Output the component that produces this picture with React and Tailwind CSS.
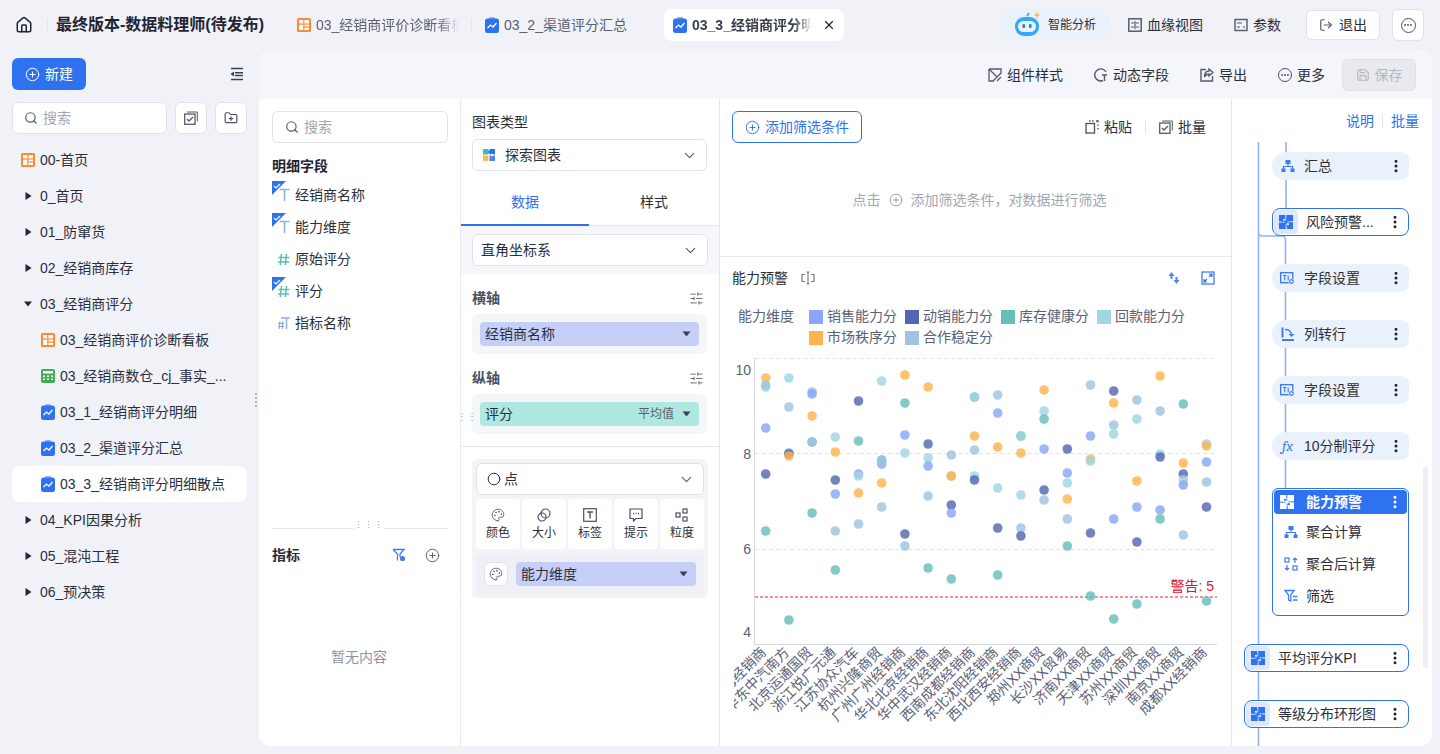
import {
  House, Search, CirclePlus, ChevronDown, X, Ellipsis, EllipsisVertical, LogOut, Save,
  SlidersHorizontal, Palette, FolderPlus, Circle,
} from 'lucide-react';

const Dash = ({ size = 14 }) => (
  <svg width={size} height={size} viewBox="0 0 14 14" className="shrink-0">
    <rect width="14" height="14" rx="1.5" fill="#ff8a2b" />
    <rect x="2" y="2" width="10" height="3.4" fill="#fff" />
    <rect x="2" y="6.6" width="4.2" height="5.4" fill="#fff" />
    <rect x="7.4" y="6.6" width="4.6" height="1.8" fill="#fff" />
    <rect x="7.4" y="9.6" width="4.6" height="2.4" fill="#fff" />
    <rect x="6.2" y="2" width="1.2" height="3.4" fill="#ff8a2b" />
  </svg>
);

const TableIcon = () => (
  <svg width="14" height="14" viewBox="0 0 14 14" className="shrink-0">
    <rect width="14" height="14" rx="2" fill="#3fae55" />
    <rect x="2" y="2" width="10" height="2.5" fill="#fff" />
    <path d="M2 6.5h2v1.5H2zM6 6.5h2v1.5H6zM10 6.5h2v1.5h-2zM2 9.5h2V11H2zM6 9.5h2V11H6zM10 9.5h2V11h-2z" fill="#fff" />
  </svg>
);

const ChartClip = () => (
  <svg width="14" height="16" viewBox="0 0 14 16" className="shrink-0">
    <rect x="4" y="0" width="6" height="3" rx="1" fill="#8fb2f5" />
    <rect y="1.5" width="14" height="14.5" rx="2.5" fill="#2f72f0" />
    <path d="M2.5 11l3-3 2.5 2 3.5-4" fill="none" stroke="#fff" strokeWidth="1.3" />
  </svg>
);

const Puzzle = ({ color = '#2f72f0', gap = '#dde8fd' }) => (
  <svg width="14" height="14" viewBox="0 0 14 14" className="shrink-0">
    <rect width="14" height="14" fill={color} />
    <path d="M6.8 0v3.5M7.2 10.5V14M0 7.2h3.5M10.5 6.8H14" stroke={gap} strokeWidth="1" />
    <path d="M4 7.2h1.5M8.5 6.8H10M6.8 4v1.5M7.2 8.5V10" stroke={gap} strokeWidth="1" />
    <circle cx="5" cy="4.8" r="1.1" fill={gap} />
    <circle cx="9" cy="9.2" r="1.1" fill={gap} />
  </svg>
);

const ColorPuzzle = () => (
  <svg width="12" height="12" viewBox="0 0 12 12" className="shrink-0">
    <rect width="5.5" height="5.5" fill="#3dbdb0" />
    <rect x="6.5" width="5.5" height="5.5" fill="#2f72f0" />
    <rect y="6.5" width="5.5" height="5.5" fill="#ffb84d" />
    <rect x="6.5" y="6.5" width="5.5" height="5.5" fill="#4f86f5" />
    <circle cx="6" cy="3" r="1.2" fill="#2f72f0" />
    <circle cx="9" cy="6" r="1.2" fill="#fff" />
  </svg>
);

const SumIcon = ({ c = '#3f7cf0' }) => (
  <svg width="14" height="14" viewBox="0 0 14 14" className="shrink-0">
    <rect x="4.5" y="1" width="5" height="4" fill={c} />
    <path d="M7 5v3M2.5 10V7.5h9V10" fill="none" stroke={c} strokeWidth="1.2" />
    <rect x="0.5" y="9.5" width="4" height="3.5" fill={c} />
    <rect x="9.5" y="9.5" width="4" height="3.5" fill={c} />
  </svg>
);

const FieldSet = () => (
  <svg width="15" height="14" viewBox="0 0 15 14" className="shrink-0">
    <rect x="0.7" y="1.7" width="12" height="10" fill="none" stroke="#3f7cf0" strokeWidth="1.4" />
    <path d="M3 4.5h3.5M4.7 4.5v5M8.2 4.5v5" stroke="#3f7cf0" strokeWidth="1.2" fill="none" />
    <circle cx="11.5" cy="10.5" r="3" fill="#e9f1fd" />
    <circle cx="11.5" cy="10.5" r="1.8" fill="none" stroke="#3f7cf0" strokeWidth="1.2" />
  </svg>
);

const Unpivot = () => (
  <svg width="14" height="14" viewBox="0 0 14 14" className="shrink-0">
    <path d="M1.5 0.5v10M1 13h12" stroke="#3f7cf0" strokeWidth="2" fill="none" />
    <path d="M4 2.5c4 0 6 1.5 6.5 5" stroke="#3f7cf0" strokeWidth="1.4" fill="none" />
    <path d="M7.5 7h6l-3 3z" fill="#3f7cf0" />
  </svg>
);

const AfterCalc = () => (
  <svg width="14" height="14" viewBox="0 0 14 14" className="shrink-0" fill="none" stroke="#3f7cf0" strokeWidth="1.2">
    <rect x="1" y="1" width="4" height="4" />
    <rect x="9" y="9" width="4" height="4" />
    <path d="M11 6V1M9 3l2-2 2 2M3 8v5M1 11l2 2 2-2" />
  </svg>
);

const FilterIcon = () => (
  <svg width="14" height="14" viewBox="0 0 14 14" className="shrink-0" fill="none" stroke="#3f7cf0" strokeWidth="1.3">
    <path d="M1 1.5h9L6.8 6v6L4.5 11V6z" />
    <path d="M9 7.5h4.5M9 11h4.5" />
  </svg>
);

const MeasureFilter = () => (
  <svg width="14" height="14" viewBox="0 0 14 14" className="shrink-0" fill="none" stroke="#3f7cf0" strokeWidth="1.3">
    <path d="M1 1.5h11L8 6v3" />
    <path d="M1 1.5L5.5 6v6.5" />
    <circle cx="10.5" cy="10.5" r="2.6" fill="#3f7cf0" stroke="none" />
  </svg>
);

const CollapseIcon = () => (
  <svg width="14" height="14" viewBox="0 0 14 14" className="shrink-0 mr-[3px]">
    <path d="M1 1.5h12M5 5.7h8M5 8.5h8M1 12.5h12" stroke="#39404f" strokeWidth="1.6" fill="none" />
    <path d="M0.5 7L4 4.5v5z" fill="#39404f" />
  </svg>
);

const FieldIcon = ({ kind, checked }) => (
  <svg width="20" height="32" viewBox="0 0 20 32" className="shrink-0">
    {kind === 'T' && <path d="M7.5 10.5h10M12.5 10.5v11.5" stroke="#8fb0e8" strokeWidth="1.6" fill="none" />}
    {kind === '#' && <path d="M9.5 11l-1.2 11M14.5 11l-1.2 11M6.5 14.5h11M6 19h11" stroke="#5cbdb2" strokeWidth="1.5" fill="none" />}
    {kind === 'mix' && (
      <>
        <path d="M9 11h9M14.5 11v11" stroke="#8fb0e8" strokeWidth="1.5" fill="none" />
        <path d="M8 14l-.8 8M11 14l-.8 8M6 16.5h6M6 19.5h6" stroke="#8fa0d8" strokeWidth="1" fill="none" />
      </>
    )}
    {checked && (
      <>
        <path d="M0 2h14L0 16z" fill="#2f72f0" />
        <path d="M2 7l2 2 4-4" stroke="#fff" strokeWidth="1.1" fill="none" />
      </>
    )}
  </svg>
);

const tree = [
  { label: '00-首页', icon: 'dash' },
  { label: '0_首页', caret: 'right' },
  { label: '01_防窜货', caret: 'right' },
  { label: '02_经销商库存', caret: 'right' },
  { label: '03_经销商评分', caret: 'down' },
  { label: '03_经销商评价诊断看板', icon: 'dash', child: true },
  { label: '03_经销商数仓_cj_事实_...', icon: 'table', child: true },
  { label: '03_1_经销商评分明细', icon: 'chart', child: true },
  { label: '03_2_渠道评分汇总', icon: 'chart', child: true },
  { label: '03_3_经销商评分明细散点', icon: 'chart', child: true, active: true },
  { label: '04_KPI因果分析', caret: 'right' },
  { label: '05_混沌工程', caret: 'right' },
  { label: '06_预决策', caret: 'right' },
];

const TreeRow = ({ row }) => (
  <div className={`h-9 flex items-center rounded-lg ${row.active ? 'bg-white' : ''} ${row.child ? 'pl-[29px]' : 'pl-[9px]'}`}>
    {row.caret === 'right' && (
      <svg width="14" height="14" viewBox="0 0 14 14" className="shrink-0"><path d="M4.5 3l6 4-6 4z" fill="#1f2533" /></svg>
    )}
    {row.caret === 'down' && (
      <svg width="14" height="14" viewBox="0 0 14 14" className="shrink-0"><path d="M3 4.5h8l-4 5z" fill="#1f2533" /></svg>
    )}
    {row.icon === 'dash' && <Dash />}
    {row.icon === 'table' && <TableIcon />}
    {row.icon === 'chart' && <ChartClip />}
    <span className="ml-[5px] whitespace-nowrap text-sm text-[#2a2f3c]">{row.label}</span>
  </div>
);

const BatchIcon = () => (
  <svg width="14" height="14" viewBox="0 0 14 14" fill="none" stroke="#555b69" strokeWidth="1.3" className="shrink-0">
    <rect x="0.7" y="3" width="10.3" height="10.3" />
    <path d="M3 1h10.3v9.5" strokeWidth="1" />
    <path d="M3 8l2 2 4-4" />
  </svg>
);

const Sidebar = () => (
  <aside className="w-[259px] shrink-0 pl-3 pr-3 relative">
    <div className="flex items-center justify-between h-8 mt-2">
      <button className="w-[74px] h-8 rounded-md bg-[#2f72f0] text-white text-sm flex items-center justify-center gap-[5px]">
        <CirclePlus size={15} strokeWidth={1.6} />
        新建
      </button>
      <CollapseIcon />
    </div>
    <div className="flex gap-2 mt-3">
      <div className="w-[155px] h-8 rounded-md bg-white border border-[#dfe2ea] flex items-center pl-[11px] gap-[5px] text-sm text-[#a2a6b0]">
        <Search size={14} className="text-[#555b69]" />
        搜索
      </div>
      <div className="w-8 h-8 rounded-md bg-white border border-[#dfe2ea] flex items-center justify-center">
        <BatchIcon />
      </div>
      <div className="w-8 h-8 rounded-md bg-white border border-[#dfe2ea] flex items-center justify-center">
        <FolderPlus size={14} className="text-[#4b5163]" />
      </div>
    </div>
    <div className="mt-2">
      {tree.map((row) => <TreeRow key={row.label} row={row} />)}
    </div>
    <div className="absolute right-[2px] top-[343px] w-[2px] h-[14px] border-l-2 border-dotted border-[#b5b9c4]" />
  </aside>
);

const TopBar = () => (
  <header className="h-[50px] flex items-center text-sm text-[#2a2f3c] shrink-0">
    <div className="w-[47px] flex justify-center pl-[1px]"><House size={18} strokeWidth={2} className="text-[#1f2533]" /></div>
    <div className="w-px h-3 bg-[#e3e5ec]" />
    <h1 className="ml-2 text-base font-bold text-[#1f2533] whitespace-nowrap w-[241px]">最终版本-数据料理师(待发布)</h1>
    <div className="w-[175px] flex items-center gap-[5px] pr-3 border-r border-[#e3e5ec] h-3">
      <Dash />
      <span className="whitespace-nowrap overflow-hidden w-[144px] text-[#5b6070] [mask-image:linear-gradient(90deg,#000_85%,transparent)]">03_经销商评价诊断看板</span>
    </div>
    <div className="ml-[13px] w-[179px] flex items-center gap-[5px] text-[#5b6070]">
      <ChartClip />
      <span className="whitespace-nowrap">03_2_渠道评分汇总</span>
    </div>
    <div className="w-[180px] h-8 rounded-lg bg-white flex items-center pl-[9px] gap-[5px] font-bold text-[#3a3f4d]">
      <ChartClip />
      <span className="whitespace-nowrap overflow-hidden w-[120px] [mask-image:linear-gradient(90deg,#000_85%,transparent)]">03_3_经销商评分明细散点</span>
      <X size={14} strokeWidth={2} className="text-[#1f2533] ml-[5px] shrink-0" />
    </div>
    <div className="ml-[156px] w-[110px] h-8 rounded-full bg-[#eaf1fb] flex items-center pl-[14px] gap-[7px] text-xs text-[#2a2f3c]">
      <svg width="27" height="26" viewBox="0 0 27 26" className="shrink-0">
        <path d="M13 4l2-3" stroke="#2f9bf5" strokeWidth="1.5" />
        <rect x="1" y="5" width="24" height="19" rx="9" fill="#35a7f8" />
        <rect x="4" y="9" width="18" height="11" rx="5.5" fill="#e4f3ff" />
        <rect x="8.5" y="12" width="2.5" height="4" rx="1" fill="#2f72f0" />
        <rect x="15" y="12" width="2.5" height="4" rx="1" fill="#2f72f0" />
        <path d="M23 0l1 2.2L26.5 3 24 4l-1 2.5L22 4l-2.5-1L22 2.2z" fill="#ffb93b" />
      </svg>
      智能分析
    </div>
    <div className="ml-[18px] flex items-center gap-[5px]">
      <svg width="14" height="14" viewBox="0 0 14 14" fill="none" stroke="#555b69" strokeWidth="1.5"><rect x="0.8" y="0.8" width="12.4" height="12.4" /><path d="M3 5h3M3 9h3M8 5h3M8 9h3M7 3v8" strokeWidth="1.2" /></svg>
      <span>血缘视图</span>
    </div>
    <div className="ml-[31px] flex items-center gap-[5px]">
      <svg width="14" height="14" viewBox="0 0 14 14" fill="none" stroke="#555b69" strokeWidth="1.4"><rect x="1" y="1.5" width="12" height="11" /><path d="M3 5h5M3 9h3M9 9h2" strokeWidth="1.2" /></svg>
      <span>参数</span>
    </div>
    <button className="ml-[25px] w-[74px] h-[30px] rounded-md bg-white border border-[#dfe2ea] flex items-center justify-center gap-[6px]">
      <LogOut size={14} className="text-[#555b69]" />
      退出
    </button>
    <button className="ml-3 w-8 h-8 rounded-md bg-white border border-[#dfe2ea] flex items-center justify-center">
      <span className="w-[15px] h-[15px] rounded-full border border-[#4b5163] flex items-center justify-center"><Ellipsis size={10} strokeWidth={2.5} className="text-[#4b5163]" /></span>
    </button>
  </header>
);

const ToolItem = ({ icon, label, className = '' }) => (
  <div className={`flex items-center gap-[5px] text-sm text-[#2a2f3c] ${className}`}>
    {icon}
    <span>{label}</span>
  </div>
);

const Toolbar = () => (
  <div className="h-[49px] bg-[#f5f6fb] rounded-t-xl flex items-center justify-end pr-4 shrink-0">
    <ToolItem label="组件样式" icon={
      <svg width="14" height="14" viewBox="0 0 14 14" fill="none" stroke="#555b69" strokeWidth="1.3"><path d="M1 1h12v5M1 1v12h5M1 1l8 8M5 13l8-8M9 13l4-4" /></svg>
    } />
    <ToolItem className="ml-[31px]" label="动态字段" icon={
      <svg width="14" height="14" viewBox="0 0 14 14" fill="none" stroke="#555b69" strokeWidth="1.4"><path d="M12 4A6 6 0 1 0 9 12.5M13 7H8M10.5 7v6" /></svg>
    } />
    <ToolItem className="ml-[31px]" label="导出" icon={
      <svg width="14" height="14" viewBox="0 0 14 14" fill="none" stroke="#555b69" strokeWidth="1.4"><path d="M6 1.5H1v11.5h11.5V8M13 4.5L9 1v2C6 3 4.5 5 4.5 9 5.5 7 7 6 9 6v2z" /></svg>
    } />
    <ToolItem className="ml-[31px]" label="更多" icon={
      <span className="w-[14px] h-[14px] rounded-full border border-[#4b5163] flex items-center justify-center"><Ellipsis size={10} strokeWidth={2.5} className="text-[#4b5163]" /></span>
    } />
    <button className="ml-[17px] w-[74px] h-8 rounded-md bg-[#e9eaef] border border-[#dfe1e7] flex items-center justify-center gap-[5px] text-sm text-[#b4b7bf]">
      <Save size={14} />
      保存
    </button>
  </div>
);

const fields = [
  { label: '经销商名称', kind: 'T', checked: true },
  { label: '能力维度', kind: 'T', checked: true },
  { label: '原始评分', kind: '#' },
  { label: '评分', kind: '#', checked: true },
  { label: '指标名称', kind: 'mix' },
];

const FieldsColumn = () => (
  <section className="w-[202px] shrink-0 border-r border-[#e9ebf0] pl-[13px] pr-3 flex flex-col relative">
    <div className="mt-3 w-[176px] h-8 rounded-md border border-[#dfe2ea] flex items-center pl-3 gap-[5px] text-sm text-[#a2a6b0]">
      <Search size={14} className="text-[#555b69]" />
      搜索
    </div>
    <div className="mt-[13px] text-sm font-bold text-[#1f2533] leading-5">明细字段</div>
    <div className="h-[165px] mt-[3px]">
      {fields.map((f) => (
        <div key={f.label} className="h-8 flex items-center gap-[3px] text-sm text-[#2a2f3c]">
          <FieldIcon kind={f.kind} checked={f.checked} />
          <span>{f.label}</span>
        </div>
      ))}
    </div>
    <div className="mt-[184px] h-px bg-[#e6e8ee] relative">
      <span className="absolute left-[82px] -top-[7px] text-[9px] leading-[9px] text-[#9aa0ad] bg-white tracking-[1px]">⋮⋮⋮</span>
    </div>
    <div className="mt-4 flex items-center text-sm font-bold text-[#2a2f3c] leading-5">
      <span className="flex-1">指标</span>
      <MeasureFilter />
      <CirclePlus size={15} strokeWidth={1.5} className="ml-[19px] mr-[8px] text-[#555b69]" />
    </div>
    <div className="mt-[82px] text-center text-sm text-[#8f94a0] -translate-x-[1px]">暂无内容</div>
  </section>
);

const Select = ({ children, className = '' }) => (
  <div className={`h-8 rounded-md bg-white border border-[#dfe2ea] flex items-center justify-between pr-2 text-sm text-[#2a2f3c] ${className}`}>
    {children}
    <ChevronDown size={17} strokeWidth={1.6} className="text-[#555b69]" />
  </div>
);

const Pill = ({ label, bg, extra }) => (
  <div className={`h-6 rounded-sm flex items-center justify-between px-[5px] pr-2 text-sm text-[#2a2f3c] ${bg}`}>
    <span>{label}</span>
    <span className="flex items-center gap-[8px]">
      {extra && <span className="text-xs text-[#5b6070]">{extra}</span>}
      <svg width="9" height="6" viewBox="0 0 9 6"><path d="M0.5 0.5h8L4.5 5.5z" fill="#3b4152" /></svg>
    </span>
  </div>
);

const AxisBlock = ({ title, pill }) => (
  <div>
    <div className="flex items-center justify-between h-5 pr-[3px]">
      <span className="text-sm font-bold text-[#4b5060]">{title}</span>
      <SlidersHorizontal size={15} strokeWidth={1.4} className="text-[#555b69]" />
    </div>
    <div className="mt-[6px] h-10 rounded-md bg-[#f5f6f9] px-2 py-2">{pill}</div>
  </div>
);

const tiles = [
  { label: '颜色', icon: <Palette size={14} strokeWidth={1.4} /> },
  { label: '大小', icon: (
    <svg width="14" height="14" viewBox="0 0 14 14" fill="none" stroke="#4b5163" strokeWidth="1.2"><circle cx="8.5" cy="5.5" r="4.5" /><circle cx="5" cy="9" r="4" /></svg>
  ) },
  { label: '标签', icon: (
    <svg width="14" height="14" viewBox="0 0 14 14" fill="none" stroke="#4b5163" strokeWidth="1.2"><rect x="0.7" y="0.7" width="12.6" height="12.6" /><path d="M4 4h6M7 4v6.5" strokeWidth="1.4" /></svg>
  ) },
  { label: '提示', icon: (
    <svg width="14" height="14" viewBox="0 0 14 14" fill="none" stroke="#4b5163" strokeWidth="1.2"><path d="M1 1h12v9.5H7L4.5 13v-2.5H1z" /><path d="M4 5.5h1M6.5 5.5h1M9 5.5h1" strokeWidth="1.4" /></svg>
  ) },
  { label: '粒度', icon: (
    <svg width="14" height="14" viewBox="0 0 14 14" fill="none" stroke="#4b5163" strokeWidth="1.2"><rect x="8" y="1" width="4" height="4" /><rect x="1" y="5" width="4" height="4" /><rect x="8" y="9" width="4" height="4" /></svg>
  ) },
];

const ConfigColumn = () => (
  <section className="w-[259px] shrink-0 border-r border-[#e4e6ec] flex flex-col relative">
    <div className="px-[11px] pr-3 pt-3">
      <div className="text-sm text-[#2a2f3c] leading-[22px]">图表类型</div>
      <Select className="mt-[6px] pl-[10px] gap-[10px] !justify-start">
        <ColorPuzzle />
        <span className="flex-1">探索图表</span>
      </Select>
    </div>
    <div className="mt-[14px] h-[41px] flex border-b border-[#e4e6ec] text-sm">
      <div className="w-[128px] flex items-center justify-center pb-[6px] text-[#2f72f0] border-b-2 border-[#2f72f0] h-[41px]">数据</div>
      <div className="w-[130px] flex items-center justify-center pb-[6px] text-[#2a2f3c]">样式</div>
    </div>
    <div className="h-[48px] bg-[#f6f7fa] px-[11px] flex items-center">
      <Select className="w-[236px] pl-2">直角坐标系</Select>
    </div>
    <div className="px-[11px] pr-3 pt-[14px] flex flex-col gap-[14px]">
      <AxisBlock title="横轴" pill={<Pill label="经销商名称" bg="bg-[#c5cff8]" />} />
      <AxisBlock title="纵轴" pill={<Pill label="评分" bg="bg-[#aee8e1]" extra="平均值" />} />
    </div>
    <div className="mt-3 h-px bg-[#e4e6ec]" />
    <div className="mx-[11px] mr-3 mt-3 w-[236px] h-[139px] rounded-md bg-[#f3f4f8] p-1">
      <Select className="pl-[10px] !justify-start gap-[3px]">
        <Circle size={14} strokeWidth={1.6} className="text-[#1f2533]" />
        <span className="flex-1">点</span>
      </Select>
      <div className="mt-1 flex gap-[2px]">
        {tiles.map((t) => (
          <div key={t.label} className="w-11 h-[50px] rounded bg-white flex flex-col items-center justify-center gap-[3px] text-xs text-[#2a2f3c]">
            <span className="text-[#4b5163] h-[14px]">{t.icon}</span>
            {t.label}
          </div>
        ))}
      </div>
      <div className="mt-[5px] h-10 rounded bg-[#eff0f5] flex items-center px-2 gap-2">
        <span className="w-6 h-6 rounded-md bg-white border border-[#dfe2ea] flex items-center justify-center shrink-0">
          <Palette size={14} strokeWidth={1.4} className="text-[#4b5163]" />
        </span>
        <div className="flex-1"><Pill label="能力维度" bg="bg-[#c5cff8]" /></div>
      </div>
    </div>
    <div className="absolute -left-[4px] top-[314px] text-[10px] leading-[7px] text-[#9aa0ad]">⋮⋮</div>
  </section>
);

const series = {
  s: { name: '销售能力分', color: '#8aa6f8' },
  d: { name: '动销能力分', color: '#5567b0' },
  k: { name: '库存健康分', color: '#64c0b8' },
  h: { name: '回款能力分', color: '#9fd6e0' },
  m: { name: '市场秩序分', color: '#ffb34d' },
  c: { name: '合作稳定分', color: '#9fc5e0' },
};

// [series, y in page pixels], one list per dealer column
const columns = [
  [['m', 379], ['h', 388], ['c', 386], ['s', 429], ['d', 475], ['k', 532]],
  [['h', 379], ['c', 408], ['s', 454], ['d', 455], ['m', 457], ['k', 621]],
  [['c', 393], ['s', 395], ['m', 417], ['k', 443], ['c', 443], ['k', 514]],
  [['h', 438], ['m', 453], ['d', 481], ['s', 495], ['c', 532], ['k', 571]],
  [['d', 402], ['k', 442], ['s', 475], ['h', 477], ['m', 494], ['c', 525]],
  [['h', 382], ['k', 461], ['s', 465], ['c', 462], ['m', 484], ['c', 508]],
  [['m', 376], ['k', 404], ['s', 436], ['h', 454], ['d', 535], ['c', 547]],
  [['m', 388], ['d', 445], ['h', 459], ['s', 467], ['c', 497], ['k', 569]],
  [['c', 456], ['h', 477], ['m', 477], ['d', 506], ['s', 514], ['k', 580]],
  [['k', 398], ['h', 398], ['m', 437], ['c', 451], ['h', 477], ['d', 481]],
  [['c', 396], ['s', 414], ['m', 448], ['h', 489], ['d', 529], ['k', 576]],
  [['k', 437], ['h', 437], ['m', 454], ['h', 496], ['c', 529], ['d', 537]],
  [['m', 391], ['h', 412], ['k', 420], ['s', 450], ['d', 491], ['c', 501]],
  [['d', 450], ['s', 474], ['h', 484], ['m', 500], ['c', 520], ['k', 547]],
  [['c', 386], ['s', 437], ['m', 460], ['h', 462], ['d', 534], ['k', 597]],
  [['d', 392], ['m', 404], ['c', 426], ['h', 435], ['s', 520], ['k', 620]],
  [['c', 401], ['h', 420], ['m', 482], ['s', 508], ['d', 543], ['k', 605]],
  [['m', 377], ['c', 412], ['h', 455], ['d', 458], ['s', 511], ['k', 520]],
  [['k', 405], ['m', 464], ['d', 475], ['h', 481], ['s', 486], ['c', 536]],
  [['h', 445], ['m', 447], ['s', 463], ['c', 483], ['d', 508], ['k', 602]],
];

const dealers = ['华东上海经销商', '华东中汽南方', '北京运通国贸', '浙江悦广元通', '江苏协众汽车', '杭州兴隆商贸', '广州广州经销商', '华北北京经销商', '华中武汉经销商', '西南成都经销商', '东北沈阳经销商', '西北西安经销商', '郑州XX商贸', '长沙XX贸易', '济南XX商贸', '天津XX商贸', '苏州XX商贸', '深圳XX商贸', '南京XX商贸', '成都XX经销商'];

const ScatterChart = () => (
  <svg width="511" height="396" viewBox="720 350 511 396" className="block">
    <defs>
      <clipPath id="labels"><rect x="734" y="646" width="490" height="79" /></clipPath>
    </defs>
    <path d="M755 359.5H1217M755 454.5H1217M755 550.5H1217" stroke="#e2e3e8" strokeDasharray="4 3" />
    <path d="M754.5 359V645.5H1217" stroke="#d5d7e2" fill="none" />
    {[['10', 371], ['8', 455], ['6', 550], ['4', 633]].map(([t, y]) => (
      <text key={t} x="751" y={y + 5} textAnchor="end" fontSize="14" fill="#5b6078">{t}</text>
    ))}
    <path d="M755 598H1217" stroke="#e8203f" strokeDasharray="3 2" strokeWidth="1" />
    <text x="1214" y="592" textAnchor="end" fontSize="14" fill="#e0142f">警告: 5</text>
    {columns.map((col, i) => col.map(([k, y], j) => (
      <circle key={`${i}-${j}`} cx={765.7 + i * 23.2} cy={y} r="4.8" fill={series[k].color} fillOpacity="0.82" />
    )))}
    <g clipPath="url(#labels)">
      {dealers.map((name, i) => {
        const x = 767 + i * 23.2;
        return (
          <text key={name} x={x} y={654} textAnchor="end" fontSize="14" fill="#5b6078" transform={`rotate(-45 ${x} 654)`}>{name}</text>
        );
      })}
    </g>
  </svg>
);

const ChartColumn = () => (
  <section className="flex-1 min-w-0 flex flex-col border-r border-[#e4e6ec]">
    <div className="h-[158px] border-b border-[#e9ebf0] shrink-0 px-3 pt-3 flex flex-col">
      <div className="flex items-center">
        <button className="w-[130px] h-8 rounded-md border border-[#2f72f0] text-[#2f72f0] text-sm flex items-center justify-center gap-[5px]">
          <CirclePlus size={15} strokeWidth={1.5} />
          添加筛选条件
        </button>
        <div className="ml-auto mr-[13px] flex items-center text-sm text-[#2a2f3c]">
          <svg width="14" height="14" viewBox="0 0 14 14" fill="none" stroke="#4b5163" strokeWidth="1.3"><rect x="1" y="3.5" width="8.5" height="9.5" /><path d="M4 1h1.5M7 1h1.5M11 1h2v1.5M13 4.5v1.5M13 8v1.5" /></svg>
          <span className="ml-[5px]">粘贴</span>
          <span className="mx-[13px] w-px h-3 bg-[#e3e5ec]" />
          <BatchIcon />
          <span className="ml-[5px]">批量</span>
        </div>
      </div>
      <div className="mt-[47px] flex items-center justify-center gap-2 text-sm text-[#a2a6b0] pl-[8px] leading-5">
        点击
        <CirclePlus size={14} strokeWidth={1.5} className="text-[#8f94a0]" />
        添加筛选条件，对数据进行筛选
      </div>
    </div>
    <div className="h-[42px] flex items-center px-3 shrink-0">
      <span className="text-sm text-[#2a2f3c]">能力预警</span>
      <svg width="14" height="14" viewBox="0 0 14 14" fill="none" stroke="#777c8a" strokeWidth="1.2" className="ml-[13px]"><path d="M4 3.5H1v7h3M10 3.5h3v7h-3M5.5 1h3M5.5 13h3M7 1v12" /></svg>
      <span className="ml-auto flex items-center gap-[20px] pr-[4px]">
        <svg width="14" height="14" viewBox="0 0 14 14" fill="#4f86f5"><path d="M4.5 1l3 4H5.5v3h-2V5h-2zM9.5 13l-3-4h2V6h2v3h2z" /></svg>
        <svg width="14" height="14" viewBox="0 0 14 14" fill="none" stroke="#2f72f0" strokeWidth="1.2"><rect x="1" y="1" width="12" height="12" /><path d="M8 3h3v3M11 3L8 6M6 11H3V8M3 11l3-3" /></svg>
      </span>
    </div>
    <div className="relative h-[50px] shrink-0 pt-[7px] pl-[18px] text-sm text-[#5b6078] leading-[21px]">
      <span className="absolute left-[18px] top-[7px]">能力维度</span>
      <div className="pl-[71px] w-[480px] flex flex-wrap">
        {Object.entries(series).map(([k, s]) => (
          <span key={k} className="w-[96px] flex items-center gap-[4px] whitespace-nowrap">
            <span className="w-[14px] h-[14px] shrink-0" style={{ backgroundColor: s.color }} />
            {s.name}
          </span>
        ))}
      </div>
    </div>
    <ScatterChart />
  </section>
);

const Dots = ({ className = 'text-[#1f2533]' }) => (
  <EllipsisVertical size={16} strokeWidth={2.5} className={`shrink-0 ${className}`} />
);

const StepPill = ({ icon, label }) => (
  <div className="h-7 w-[137px] ml-10 rounded-l-[14px] rounded-r-lg bg-[#e9f1fd] flex items-center pl-[7px] pr-[5px] relative text-sm text-[#2a2f3c]">
    <span className="w-[17px] flex justify-center">{icon}</span>
    <span className="ml-2 flex-1 whitespace-nowrap">{label}</span>
    <Dots />
  </div>
);

const StepBox = ({ label, wide }) => (
  <div className={`h-7 rounded-lg border border-[#2f72f0] bg-white flex items-center pl-[1px] pr-[5px] relative text-sm text-[#2a2f3c] ${wide ? 'w-[165px] ml-3' : 'w-[137px] ml-10'}`}>
    <span className="w-6 h-6 rounded bg-[#dde8fd] flex items-center justify-center shrink-0"><Puzzle /></span>
    <span className="ml-2 flex-1 whitespace-nowrap">{label}</span>
    <Dots />
  </div>
);

const ExpandedStep = () => (
  <div className="w-[137px] ml-10 h-[128px] rounded-md border border-[#2f72f0] bg-white p-[1px] relative text-sm text-[#2a2f3c]">
    <div className="h-6 mb-[2px] rounded bg-[#2f72f0] flex items-center pl-[6px] pr-1 text-white font-bold">
      <Puzzle color="#fff" gap="#2f72f0" />
      <span className="ml-3 flex-1">能力预警</span>
      <Dots className="text-white" />
    </div>
    {[['聚合计算', <SumIcon key="a" />], ['聚合后计算', <AfterCalc key="b" />], ['筛选', <FilterIcon key="c" />]].map(([t, ic]) => (
      <div key={t} className="h-8 flex items-center pl-[10px] gap-2">{ic}{t}</div>
    ))}
  </div>
);

const FlowColumn = () => (
  <section className="w-[200px] shrink-0 relative overflow-hidden rounded-br-xl">
    <div className="h-[43px] flex items-center justify-end pr-[13px] text-sm text-[#2f72f0]">
      说明
      <span className="mx-2 w-px h-[14px] bg-[#e3e5ec]" />
      批量
    </div>
    <svg width="200" height="604" viewBox="1232 142 200 604" className="absolute left-0 top-[43px]">
      <path d="M1258.5 142V746M1286 142V208M1258.5 226v6a4 4 0 0 0 4 4h19a4 4 0 0 1 4 4v260" fill="none" stroke="#8fb2f5" strokeWidth="1.6" />
    </svg>
    <div className="pt-[10px] flex flex-col gap-7 relative">
      <StepPill icon={<SumIcon />} label="汇总" />
      <StepBox label="风险预警..." />
      <StepPill icon={<FieldSet />} label="字段设置" />
      <StepPill icon={<Unpivot />} label="列转行" />
      <StepPill icon={<FieldSet />} label="字段设置" />
      <StepPill icon={<span className="italic font-serif text-[#3f7cf0] text-[15px] leading-none">fx</span>} label="10分制评分" />
      <ExpandedStep />
      <StepBox label="平均评分KPI" wide />
      <StepBox label="等级分布环形图" wide />
    </div>
    <div className="absolute left-[191px] top-[368px] w-[5px] h-[201px] rounded-full bg-[#eceef3]" />
  </section>
);

export default function App() {
  return (
    <div className="w-[1440px] h-[754px] overflow-hidden bg-[#f0f2f8] flex flex-col font-['Liberation_Sans','Noto_Sans_CJK_SC',sans-serif]">
      <TopBar />
      <div className="flex flex-1 min-h-0">
        <Sidebar />
        <main className="w-[1173px] h-[696px] rounded-xl bg-white flex flex-col overflow-hidden">
          <Toolbar />
          <div className="flex flex-1 min-h-0">
            <FieldsColumn />
            <ConfigColumn />
            <ChartColumn />
            <FlowColumn />
          </div>
        </main>
      </div>
    </div>
  );
}
